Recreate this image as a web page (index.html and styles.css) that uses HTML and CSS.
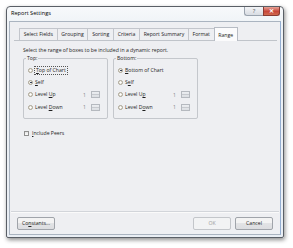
FILE: index.html
```html
<!DOCTYPE html>
<html>
<head>
<meta charset="utf-8">
<link rel="stylesheet" href="styles.css">
</head>
<body>
<div class="window">
  <div class="titlebar">
    <span class="title">Report Settings</span>
    <div class="caption-btns">
      <span class="cbtn help">?</span>
      <span class="cbtn close">✕</span>
    </div>
  </div>
  <div class="client">
    <div class="tabs">
      <span class="tab">Select Fields</span>
      <span class="tab">Grouping</span>
      <span class="tab">Sorting</span>
      <span class="tab">Criteria</span>
      <span class="tab">Report Summary</span>
      <span class="tab">Format</span>
      <span class="tab active">Range</span>
    </div>
    <div class="panel">
      <p class="desc">Select the range of boxes to be included in a dynamic report.</p>
      <div class="groups">
        <div class="group">
          <span class="legend">Top:</span>
          <div class="row"><span class="radio"></span><span class="lbl focus"><u>T</u>op of Chart</span></div>
          <div class="row"><span class="radio on"></span><span class="lbl"><u>S</u>elf</span></div>
          <div class="row"><span class="radio"></span><span class="lbl">Level <u>U</u>p</span><span class="num">1</span><span class="spin"></span></div>
          <div class="row"><span class="radio"></span><span class="lbl">Level <u>D</u>own</span><span class="num">1</span><span class="spin"></span></div>
        </div>
        <div class="group">
          <span class="legend">Bottom:</span>
          <div class="row"><span class="radio on"></span><span class="lbl"><u>B</u>ottom of Chart</span></div>
          <div class="row"><span class="radio"></span><span class="lbl">S<u>e</u>lf</span></div>
          <div class="row"><span class="radio"></span><span class="lbl">Level U<u>p</u></span><span class="num">1</span><span class="spin"></span></div>
          <div class="row"><span class="radio"></span><span class="lbl">Level D<u>o</u>wn</span><span class="num">1</span><span class="spin"></span></div>
        </div>
      </div>
      <div class="check"><span class="box"></span><span class="lbl"><u>I</u>nclude Peers</span></div>
    </div>
    <div class="footer">
      <span class="btn">Co<u>n</u>stants...</span>
      <span class="spacer"></span>
      <span class="btn disabled">OK</span>
      <span class="btn">Cancel</span>
    </div>
  </div>
</div>
</body>
</html>
```
FILE: styles.css
```css
html, body {
  margin: 0;
  padding: 0;
  background: #ffffff;
}
body {
  font-family: "Open Sans", "Noto Sans", sans-serif;
  font-size: 5.15px;
  color: #1e1e1e;
  width: 293px;
  height: 248px;
  overflow: hidden;
}
u { text-decoration: underline; text-underline-offset: 0.5px; }
.window {
  margin: 6px 0 0 6px;
  width: 278px;
  height: 232px;
  box-sizing: border-box;
  border: 1px solid #5a5f66;
  border-radius: 4px 4px 2px 2px;
  background: linear-gradient(#f7f9fb, #eef2f6 20px, #e9eef4);
  box-shadow: 1px 2px 4px rgba(0,0,0,0.45);
  display: flex;
  flex-direction: column;
}
.titlebar {
  height: 14px;
  display: flex;
  align-items: flex-start;
  padding-left: 4px;
}
.title {
  font-size: 5.6px;
  line-height: 13px;
  color: #000;
}
.caption-btns {
  margin-left: auto;
  margin-right: 3px;
  display: flex;
  height: 9px;
}
.cbtn {
  display: flex;
  align-items: center;
  justify-content: center;
  height: 9px;
  font-size: 6px;
  box-sizing: border-box;
  border: 1px solid #9aa3ae;
  border-top: none;
}
.help {
  width: 19px;
  background: linear-gradient(#f3f4f6, #d8dce2);
  color: #555;
  border-radius: 0 0 0 3px;
  border-right: none;
}
.close {
  width: 17px;
  background: linear-gradient(#e7a398, #c8473a 55%, #d06a4f);
  color: #fff;
  border-color: #8a3a32;
  border-radius: 0 0 3px 0;
  font-weight: bold;
}
.client {
  flex: 1;
  margin: 0 2px 2px 2px;
  border: 1px solid #aab4c0;
  border-right-color: #94aed1;
  background: #eeeff2;
  display: flex;
  flex-direction: column;
}
.tabs {
  display: flex;
  align-items: flex-end;
  padding: 5px 0 0 9px;
  height: 13px;
}
.tab {
  height: 11px;
  line-height: 11px;
  padding: 0 3.7px;
  border: 1px solid #c3c6cc;
  border-bottom: none;
  background: #eeeff2;
  margin-right: -1px;
  color: #222;
}
.tab.active {
  height: 13px;
  line-height: 14px;
  background: #fbfbfc;
  border-color: #b7bcc4;
  position: relative;
  z-index: 1;
  margin-bottom: -1px;
}
.panel {
  flex: 0 0 auto;
  height: 170px;
  margin: 0 3px 0 4px;
  border-top: 1px solid #c0c4ca;
  padding: 0 9px;
}
.desc {
  margin: 5px 0 0 0;
  line-height: 9px;
}
.groups {
  display: flex;
  gap: 5px;
  margin-top: 3px;
}
.group {
  width: 85px;
  height: 61px;
  box-sizing: border-box;
  border: 1px solid #c4c7cc;
  border-radius: 2px;
  padding: 5px 0 0 4px;
  position: relative;
}
.legend {
  position: absolute;
  top: -4px;
  left: 2px;
  padding: 0 1px;
  line-height: 7px;
  background: #eeeff2;
}
.row {
  display: flex;
  align-items: center;
  height: 12.3px;
}
.radio {
  width: 5px;
  height: 5px;
  border-radius: 50%;
  border: 1px solid #a7a08f;
  background: radial-gradient(#fff, #e8e4d8);
  box-sizing: border-box;
  margin-right: 2px;
  position: relative;
}
.radio.on::after {
  content: "";
  position: absolute;
  left: 1px;
  top: 1px;
  width: 1.5px;
  height: 1.5px;
  border-radius: 50%;
  background: #1c2a44;
}
.lbl { line-height: 7px; }
.focus {
  outline: 1px dotted #555;
  outline-offset: 0;
  padding: 0 1px;
}
.num {
  margin-left: auto;
  color: #888;
  margin-right: 5px;
}
.spin {
  width: 9px;
  height: 7px;
  box-sizing: border-box;
  border: 1px solid #b5b9bf;
  background: linear-gradient(#eceef1, #dcdfe3);
  margin-right: 7px;
  position: relative;
}
.spin::after {
  content: "";
  position: absolute;
  left: 0; right: 0; top: 2px;
  border-top: 1px solid #c6c9ce;
}
.check {
  display: flex;
  align-items: center;
  margin-top: 11px;
  margin-left: 1px;
}
.box {
  width: 5px;
  height: 5px;
  box-sizing: border-box;
  border: 1px solid #8f8f8f;
  background: linear-gradient(#e5e5e5, #fbfbfb);
  margin-right: 3px;
}
.footer {
  flex: 1;
  display: flex;
  align-items: center;
  padding: 0 6px 0 6px;
  border-top: 1px solid #d2d5da;
  box-shadow: inset 0 1px 0 #fafafa;
  margin: 0 1px;
}
.spacer { flex: 1; }
.btn {
  height: 13px;
  line-height: 11px;
  box-sizing: border-box;
  border: 1px solid #a0a4aa;
  border-radius: 2px;
  background: linear-gradient(#f3f3f3 50%, #e2e3e5 50%, #dcdde0);
  text-align: center;
  min-width: 38px;
  padding: 0 2px;
  color: #222;
}
.btn + .btn { margin-left: 4px; }
.btn.disabled {
  color: #9a9a9a;
  background: #f2f3f4;
  border-color: #c3c6ca;
}
```
